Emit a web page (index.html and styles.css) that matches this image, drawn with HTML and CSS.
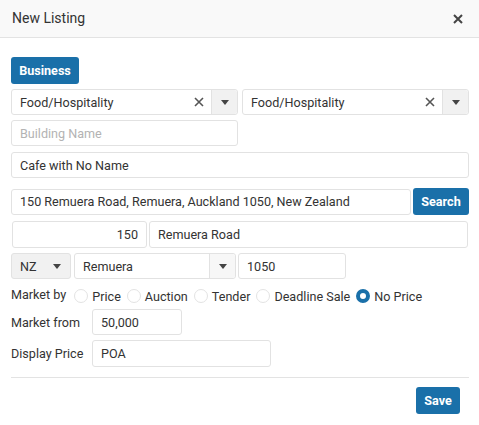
FILE: index.html
```html
<!DOCTYPE html>
<html>
<head>
<meta charset="utf-8">
<link rel="stylesheet" href="styles.css">
</head>
<body>
<div class="modal">
  <div class="header">
    <span class="title">New Listing</span>
    <svg class="close" width="10" height="10" viewBox="0 0 10 10"><path d="M1 1L9 9M9 1L1 9" stroke="#444" stroke-width="2"/></svg>
  </div>
  <div class="content">
    <div class="row r-btn"><button class="btn btn-business">Business</button></div>
    <div class="row r-sel">
      <div class="select half">
        <span class="val">Food/Hospitality</span>
        <svg class="clear" width="10" height="10" viewBox="0 0 10 10"><path d="M1 1L9 9M9 1L1 9" stroke="#555" stroke-width="1.6"/></svg>
        <span class="arrow"><i class="tri"></i></span>
      </div>
      <div class="select half">
        <span class="val">Food/Hospitality</span>
        <svg class="clear" width="10" height="10" viewBox="0 0 10 10"><path d="M1 1L9 9M9 1L1 9" stroke="#555" stroke-width="1.6"/></svg>
        <span class="arrow"><i class="tri"></i></span>
      </div>
    </div>
    <div class="row r-build"><div class="input half placeholder">Building Name</div></div>
    <div class="row r-cafe"><div class="input full">Cafe with No Name</div></div>
    <div class="row r-addr">
      <div class="input addr">150 Remuera Road, Remuera, Auckland 1050, New Zealand</div>
      <button class="btn btn-search">Search</button>
    </div>
    <div class="row r-num">
      <div class="input num">150</div>
      <div class="input street">Remuera Road</div>
    </div>
    <div class="row r-sub">
      <div class="select country"><span class="val">NZ</span><i class="tri"></i></div>
      <div class="select suburb"><span class="val">Remuera</span><span class="arrow"><i class="tri"></i></span></div>
      <div class="input post">1050</div>
    </div>
    <div class="row r-market">
      <span class="lbl-inline">Market by</span>
      <span class="radio"><i class="circle"></i>Price</span>
      <span class="radio"><i class="circle"></i>Auction</span>
      <span class="radio"><i class="circle"></i>Tender</span>
      <span class="radio"><i class="circle"></i>Deadline Sale</span>
      <span class="radio"><i class="circle checked"></i>No Price</span>
    </div>
    <div class="row r-from">
      <span class="lbl">Market from</span>
      <div class="input from">50,000</div>
    </div>
    <div class="row r-disp">
      <span class="lbl">Display Price</span>
      <div class="input disp">POA</div>
    </div>
    <div class="divider"></div>
    <div class="row r-save"><button class="btn btn-save">Save</button></div>
  </div>
</div>
</body>
</html>
```

FILE: styles.css
```css
* { box-sizing: border-box; }
html, body { margin: 0; padding: 0; background: #fff; }
body { font-family: Roboto, "Liberation Sans", sans-serif; font-size: 12.6px; color: #333; width: 479px; }
.header { height: 38px; background: #f9f9f9; border-bottom: 1px solid #e3e3e3; display: flex; align-items: center; justify-content: space-between; padding: 0 16px 0 12px; }
.title { font-size: 14px; color: #333; margin-top: -2px; }
.close { display: block; }
.content { padding: 19px 10px 0 11px; }
.row { display: flex; align-items: center; }
.btn { font-family: Roboto, "Liberation Sans", sans-serif; font-weight: bold; font-size: 12.6px; color: #fff; background: #1a70a9; border: none; border-radius: 3px; padding: 0; }
.btn-business { width: 68px; height: 27px; }
.input, .select { height: 26px; border: 1px solid #e2e2e2; border-radius: 3px; background: #fff; display: flex; align-items: center; padding: 0 8px; color: #333; }
.half { width: 227px; }
.full { width: 458px; }
.r-sel { margin-top: 5px; gap: 4px; }
.select { position: relative; padding-right: 0; }
.select .val { flex: 1; }
.clear { margin-right: 7px; }
.arrow { width: 26px; height: 100%; border-left: 1px solid #e2e2e2; background: #f1f1f1; display: flex; align-items: center; justify-content: center; border-radius: 0 3px 3px 0; }
.tri { display: block; width: 0; height: 0; border-left: 4px solid transparent; border-right: 4px solid transparent; border-top: 5px solid #444; }
.placeholder { color: #b3b3b3; }
.r-build { margin-top: 5px; }
.r-cafe { margin-top: 6px; }
.r-addr { margin-top: 10px; gap: 2px; }
.addr { width: 400px; }
.btn-search { width: 56px; height: 27px; }
.r-num { margin-top: 6px; gap: 2px; padding-left: 1px; }
.input.num { width: 135px; height: 27px; justify-content: flex-end; }
.input.street { width: 319px; height: 27px; }
.r-sub { margin-top: 5px; gap: 3px; }
.country { width: 60px; background: #f1f1f1; padding: 0 9px 0 8px; }
.suburb { width: 162px; }
.suburb .arrow { background: #f7f7f7; }
.input.post { width: 108px; margin-left: -1px; }
.r-market { margin-top: 8px; height: 18px; }
.lbl-inline { margin-right: 8px; margin-top: -3px; }
.radio { display: flex; align-items: center; margin-right: 6px; }
.circle { display: block; width: 14px; height: 14px; border: 1px solid #e3e3e3; border-radius: 50%; margin-right: 4px; background: #fff; }
.circle.checked { border: 4px solid #1a70a9; }
.r-from { margin-top: 4px; }
.lbl { width: 81px; }
.input.from { width: 90px; }
.r-disp { margin-top: 5px; }
.input.disp { width: 179px; height: 27px; }
.divider { height: 1px; background: #e3e3e3; margin-top: 10px; width: 458px; }
.r-save { margin-top: 9px; justify-content: flex-end; padding-right: 9px; }
.btn-save { width: 44px; height: 27px; }
```
